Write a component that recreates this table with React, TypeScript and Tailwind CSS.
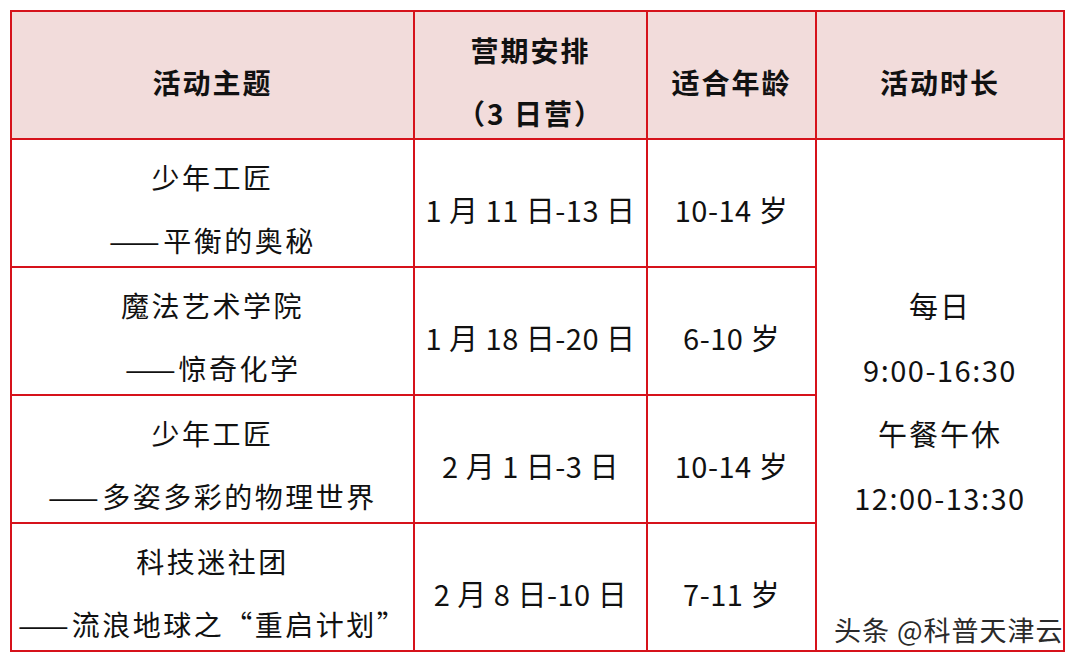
import React from "react";

function Dash() {
  return (
    <span className="inline-block tracking-normal scale-x-[1.08] origin-left mr-[7px]">——</span>
  );
}

const rows = [
  { title: "少年工匠", sub: <><Dash />平衡的奥秘</>, date: "1 月 11 日-13 日", age: "10-14 岁" },
  { title: "魔法艺术学院", sub: <><Dash />惊奇化学</>, date: "1 月 18 日-20 日", age: "6-10 岁" },
  { title: "少年工匠", sub: <><Dash />多姿多彩的物理世界</>, date: "2 月 1 日-3 日", age: "10-14 岁" },
  {
    title: "科技迷社团",
    sub: (
      <>
        <Dash />流浪地球之<span className="[font-feature-settings:'fwid']">“</span>重启计划<span className="[font-feature-settings:'fwid']">”</span>
      </>
    ),
    date: "2 月 8 日-10 日",
    age: "7-11 岁",
  },
];

const cell = "border-2 border-[#d6121b] text-center align-middle p-0 whitespace-nowrap";

export default function App() {
  return (
    <div
      lang="zh-CN"
      className="w-[1080px] h-[662px] bg-white relative overflow-hidden"
      style={{ fontFamily: '"Noto Sans CJK SC", "Noto Sans", sans-serif' }}
    >
      <div className="pt-[10px] pl-[10px]">
        <table className="table-fixed border-collapse w-[1053px] text-[#111] text-[28px]">
          <colgroup>
            <col className="w-[403px]" />
            <col className="w-[233px]" />
            <col className="w-[169px]" />
            <col className="w-[248px]" />
          </colgroup>
          <thead>
            <tr className="h-[127px] bg-[#f2dcdb] font-bold tracking-[2px]">
              <th className={cell}>
                <div className="translate-y-[7px] leading-[40px]">活动主题</div>
              </th>
              <th className={cell}>
                <div className="translate-y-[7px]">
                  <div className="leading-[63px]">营期安排</div>
                  <div className="leading-[63px]">（3 日营）</div>
                </div>
              </th>
              <th className={cell}>
                <div className="translate-y-[7px] leading-[40px]">适合年龄</div>
              </th>
              <th className={cell}>
                <div className="translate-y-[7px] leading-[40px]">活动时长</div>
              </th>
            </tr>
          </thead>
          <tbody>
            {rows.map((r, i) => (
              <tr key={i} className="h-[128px]">
                <td className={cell}>
                  <div className="translate-y-[6px] tracking-[2.5px]">
                    <div className="leading-[63px]">{r.title}</div>
                    <div className="leading-[63px]">{r.sub}</div>
                  </div>
                </td>
                <td className={cell}>
                  <div className="translate-y-[6px] leading-[40px] text-[29px] tracking-[0.5px]">{r.date}</div>
                </td>
                <td className={cell}>
                  <div className="translate-y-[6px] leading-[40px] text-[29px] tracking-[0.5px]">{r.age}</div>
                </td>
                {i === 0 && (
                  <td rowSpan={4} className={cell}>
                    <div className="translate-y-[6px] text-[29px]">
                      <div className="leading-[64px] tracking-[2px]">每日</div>
                      <div className="leading-[64px] tracking-[1.5px]">9:00-16:30</div>
                      <div className="leading-[64px] tracking-[2px]">午餐午休</div>
                      <div className="leading-[64px] tracking-[1.5px]">12:00-13:30</div>
                    </div>
                  </td>
                )}
              </tr>
            ))}
          </tbody>
        </table>
      </div>
      <div
        className="absolute left-[834px] top-[611px] text-[27px] tracking-[1px] leading-[38px] text-[#2a2a2a] whitespace-nowrap"
        style={{ textShadow: "1px 1px 0 #fff, -1px -1px 0 #fff, 1px -1px 0 #fff, -1px 1px 0 #fff" }}
      >
        头条 @科普天津云
      </div>
    </div>
  );
}
